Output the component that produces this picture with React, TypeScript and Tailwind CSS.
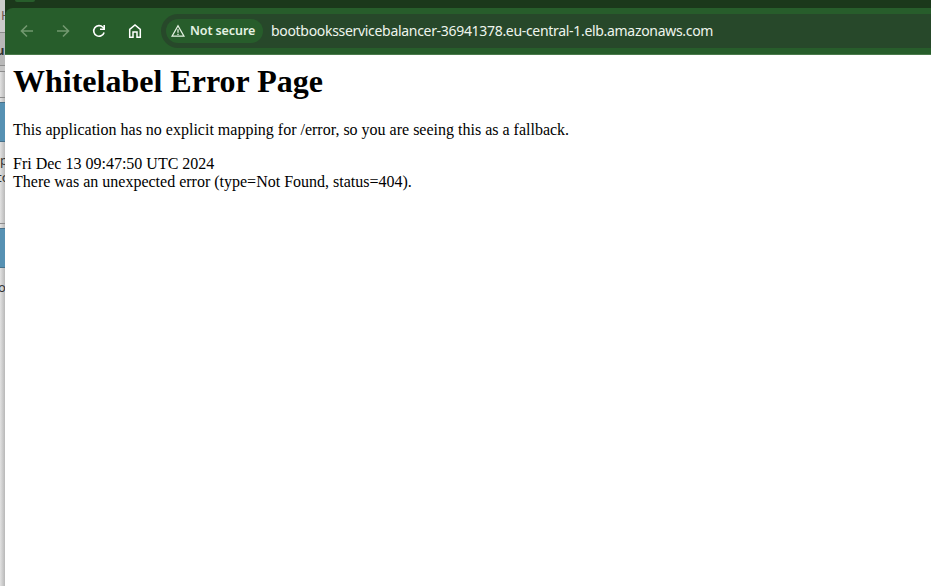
import type { ReactNode } from "react";

function Slice({ className, children }: { className: string; children?: ReactNode }) {
  return (
    <div className={`flex w-[5px] shrink-0 overflow-hidden border-[#8c8c8c] ${className}`}>
      {children}
    </div>
  );
}

function BackgroundWindow() {
  return (
    <div className="flex w-[5px] shrink-0 flex-col overflow-hidden bg-gradient-to-r from-[#e2e2e2] to-[#b8b8b8] font-['Noto_Sans',sans-serif] text-[13px] leading-[18px] text-[#333]">
      <Slice className="h-[33px] border-b bg-[#cbcbcb] pt-[6px] pl-px">
        <span className="text-[#6b5650]">H</span>
      </Slice>
      <Slice className="h-[33px] border-b bg-[#b8b8b8] pt-[8px]">
        <span className="-ml-[4px] font-bold">u</span>
      </Slice>
      <Slice className="h-[6px] border-b bg-[#c5c5c5]" />
      <Slice className="h-[26px] border-b" />
      <Slice className="h-[4px]" />
      <Slice className="h-[40px] border-y border-[#47718a] bg-[#5691b3]" />
      <Slice className="h-[82px] flex-col border-b pt-[10px]">
        <span className="leading-[17px]">p</span>
        <span className="-ml-[3px] leading-[17px]">to</span>
      </Slice>
      <Slice className="h-[4px]" />
      <Slice className="h-[40px] border-y border-[#47718a] bg-[#5691b3]" />
      <Slice className="flex-1 pt-[10px]">
        <span className="-ml-[2px]">o</span>
      </Slice>
    </div>
  );
}

function Toolbar() {
  return (
    <div className="h-[47px] bg-[#1b381b]">
      <div className="flex h-[47px] items-center rounded-tl-[8px] border-b border-[#4a7a4b] bg-[#275d2b] pl-[14px]">
        <svg className="mr-5 size-4" viewBox="0 0 16 16" fill="none" stroke="#72986f" strokeWidth="1.6">
          <path d="M14 8H3M8 2.5L2.5 8L8 13.5" />
        </svg>
        <svg className="mr-5 size-4" viewBox="0 0 16 16" fill="none" stroke="#72986f" strokeWidth="1.6">
          <path d="M2 8H13M8 2.5L13.5 8L8 13.5" />
        </svg>
        <svg className="mr-5 size-4" viewBox="0 0 16 16" fill="none" stroke="#fff" strokeWidth="1.6">
          <path d="M13.1 9.4A5.3 5.3 0 1 1 11.9 4.3L13 5.4" />
          <path d="M13.2 2V6.2H9" />
        </svg>
        <svg className="mr-[18px] size-4" viewBox="0 0 16 16" fill="none" stroke="#fff" strokeWidth="1.5">
          <path d="M2.7 6.4L8 2L13.3 6.4V14.2H10V9H6V14.2H2.7Z" />
        </svg>
        <div className="flex h-[34px] min-w-0 flex-1 items-center rounded-l-full bg-[#27482a] pl-[5px]">
          <div className="flex h-6 w-[97px] shrink-0 items-center rounded-full bg-[#275d2b] pl-[5px] text-[#e4f2e2]">
            <svg className="mr-[5px] h-[14px] w-[14px] shrink-0" viewBox="0 0 14 14" fill="none" stroke="currentColor" strokeWidth="1.3">
              <path d="M7 1.8L13 12.2H1Z" />
              <path d="M7 5.3V8.8M7 9.7V11" />
            </svg>
            <span className="whitespace-nowrap font-['Noto_Sans',sans-serif] text-[12.5px] font-semibold leading-none tracking-[-0.1px]">Not secure</span>
          </div>
          <span className="ml-[8px] whitespace-nowrap font-['Noto_Sans',sans-serif] text-[14px] leading-none tracking-[-0.31px] text-[#eef5ed]">
            bootbooksservicebalancer-36941378.eu-central-1.elb.amazonaws.com
          </span>
        </div>
      </div>
    </div>
  );
}

export default function App() {
  return (
    <div className="flex h-[586px] w-[931px] overflow-hidden bg-white">
      <BackgroundWindow />
      <div className="flex min-w-0 flex-1 flex-col">
        <div className="h-2 overflow-hidden bg-[#1b381b] pl-[10px]">
          <div className="h-[2px] w-5 rounded-b-full bg-[#275d2b]" />
        </div>
        <Toolbar />
        <main className="flex-1 pl-2 pt-2 font-['Liberation_Serif',serif] text-[16px] leading-[18px] text-black">
          <h1 className="text-[32px] font-bold leading-[37px]">Whitelabel Error Page</h1>
          <p className="mt-[21px]">This application has no explicit mapping for /error, so you are seeing this as a fallback.</p>
          <div className="mt-4">Fri Dec 13 09:47:50 UTC 2024</div>
          <div>There was an unexpected error (type=Not Found, status=404).</div>
        </main>
      </div>
    </div>
  );
}
